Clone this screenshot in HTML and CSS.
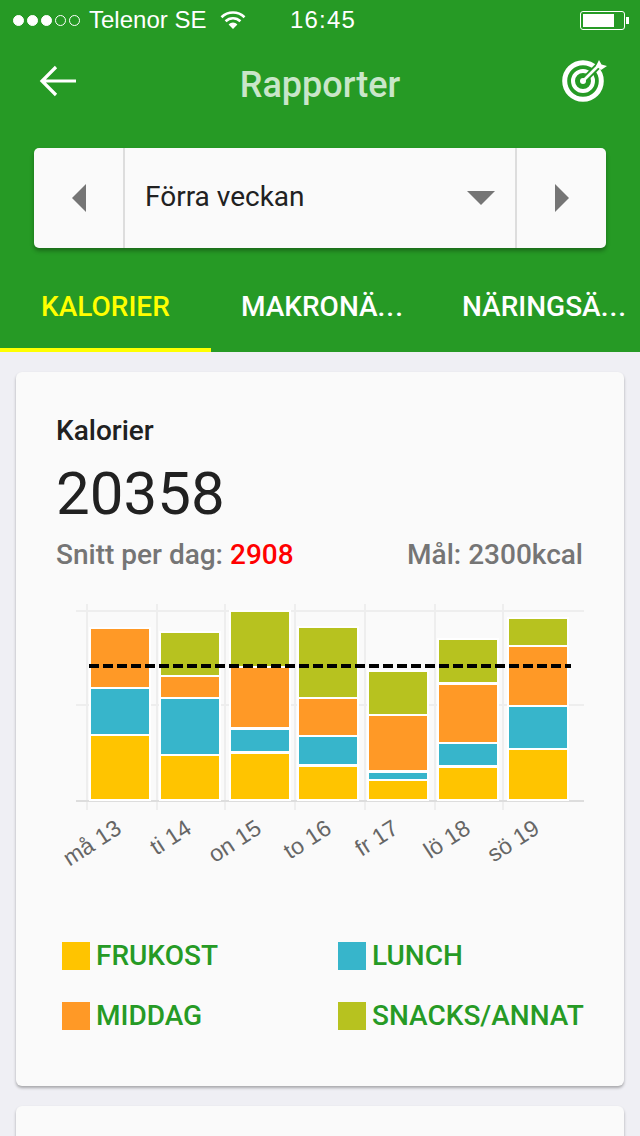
FILE: index.html
```html
<!DOCTYPE html>
<html lang="sv">
<head>
    <meta charset="UTF-8">
    <meta name="viewport" content="width=device-width, initial-scale=1.0">
    <title>Rapporter</title>
    <link rel="stylesheet" href="styles.css">
</head>
<body>
    <header class="top">
        <div class="status-bar">
            <div class="signal">
                <span class="dot"></span><span class="dot"></span><span class="dot"></span><span class="dot off"></span><span class="dot off"></span>
            </div>
            <span class="carrier">Telenor SE</span>
            <svg class="wifi" width="26" height="20" viewBox="0 0 26 20">
                <path d="M1.5 7.2a16.5 16.5 0 0 1 23 0" fill="none" stroke="#fff" stroke-width="2.6"/>
                <path d="M5.6 11.2a10.6 10.6 0 0 1 14.8 0" fill="none" stroke="#fff" stroke-width="2.6"/>
                <path d="M13 19l-4.4-4.6a6.2 6.2 0 0 1 8.8 0z" fill="#fff"/>
            </svg>
            <span class="clock">16:45</span>
            <div class="battery"><div class="battery-fill"></div></div>
            <div class="battery-nub"></div>
        </div>
        <div class="nav">
            <svg class="back" width="38" height="32" viewBox="0 0 38 32">
                <path d="M37 16H3M17 2L3 16l14 14" fill="none" stroke="#fff" stroke-width="3.2"/>
            </svg>
            <h1 class="nav-title">Rapporter</h1>
            <svg class="goal" width="48" height="48" viewBox="0 0 48 48">
                <circle cx="23" cy="23" r="18.3" fill="none" stroke="#fff" stroke-width="5"/>
                <circle cx="23" cy="23" r="10" fill="none" stroke="#fff" stroke-width="4"/>
                <path d="M23 23L41 5" stroke="#269a25" stroke-width="6.5"/>
                <path d="M23 23L40 6" stroke="#fff" stroke-width="2.6"/>
                <circle cx="23" cy="23" r="3" fill="#fff"/>
                <path d="M36 8l3-6 2.5 4.5 5.5 1.5-6 4z" fill="#fff"/>
            </svg>
        </div>
        <div class="range">
            <div class="range-btn">
                <svg width="14" height="28" viewBox="0 0 14 28"><path d="M14 0v28L0 14z" fill="#757575"/></svg>
            </div>
            <div class="range-select">
                <span class="range-label">Förra veckan</span>
                <svg width="28" height="14" viewBox="0 0 28 14"><path d="M0 0h28L14 14z" fill="#757575"/></svg>
            </div>
            <div class="range-btn">
                <svg width="14" height="28" viewBox="0 0 14 28"><path d="M0 0v28l14-14z" fill="#757575"/></svg>
            </div>
        </div>
        <nav class="tabs">
            <div class="tab tab-active">Kalorier</div>
            <div class="tab tab-macro">Makronä<span class="dots">...</span></div>
            <div class="tab tab-nutri">Näringsä<span class="dots">...</span></div>
        </nav>
    </header>

    <main class="content">
        <section class="card">
            <div class="card-title">Kalorier</div>
            <div class="total">20358</div>
            <div class="summary">
                <span>Snitt per dag: <b class="over">2908</b></span>
                <span>Mål: 2300kcal</span>
            </div>
            <svg class="chart" width="608" height="320" viewBox="16 590 608 320">
                <g class="grid">
                    <path d="M76 611H584M76 705H584"/>
                    <path d="M87 604V810M157 604V810M225 604V810M295 604V810M365 604V810M435 604V810M503 604V810"/>
                </g>
                <path class="axis" d="M76 801H584"/>

                <g class="backing">
                    <rect x="89" y="627" width="62" height="174"/>
                    <rect x="159" y="631" width="62" height="170"/>
                    <rect x="229" y="610" width="62" height="191"/>
                    <rect x="297" y="626" width="62" height="175"/>
                    <rect x="367" y="670" width="62" height="131"/>
                    <rect x="437" y="638" width="62" height="163"/>
                    <rect x="507" y="617" width="62" height="184"/>
                </g>

                <rect class="olive" x="161" y="633" width="58" height="42"/>
                <rect class="olive" x="231" y="612" width="58" height="54"/>
                <rect class="olive" x="299" y="628" width="58" height="69"/>
                <rect class="olive" x="369" y="672" width="58" height="42"/>
                <rect class="olive" x="439" y="640" width="58" height="42"/>
                <rect class="olive" x="509" y="619" width="58" height="26"/>

                <rect class="orange" x="91" y="629" width="58" height="58"/>
                <rect class="orange" x="161" y="677" width="58" height="20"/>
                <rect class="orange" x="231" y="668" width="58" height="59"/>
                <rect class="orange" x="299" y="699" width="58" height="36"/>
                <rect class="orange" x="369" y="716" width="58" height="54"/>
                <rect class="orange" x="439" y="685" width="58" height="57"/>
                <rect class="orange" x="509" y="647" width="58" height="58"/>

                <rect class="teal" x="91" y="689" width="58" height="45"/>
                <rect class="teal" x="161" y="699" width="58" height="55"/>
                <rect class="teal" x="231" y="730" width="58" height="21"/>
                <rect class="teal" x="299" y="737" width="58" height="27"/>
                <rect class="teal" x="369" y="773" width="58" height="6"/>
                <rect class="teal" x="439" y="744" width="58" height="21"/>
                <rect class="teal" x="509" y="707" width="58" height="41"/>

                <rect class="yellow" x="91" y="736" width="58" height="63"/>
                <rect class="yellow" x="161" y="756" width="58" height="43"/>
                <rect class="yellow" x="231" y="754" width="58" height="45"/>
                <rect class="yellow" x="299" y="767" width="58" height="32"/>
                <rect class="yellow" x="369" y="781" width="58" height="18"/>
                <rect class="yellow" x="439" y="768" width="58" height="31"/>
                <rect class="yellow" x="509" y="750" width="58" height="49"/>

                <path class="goal-line" d="M89 666H571"/>

                <g class="labels">
                    <text transform="translate(123 832) rotate(-33)">må 13</text>
                    <text transform="translate(193 832) rotate(-33)">ti 14</text>
                    <text transform="translate(263 832) rotate(-33)">on 15</text>
                    <text transform="translate(333 832) rotate(-33)">to 16</text>
                    <text transform="translate(400 832) rotate(-33)">fr 17</text>
                    <text transform="translate(472 832) rotate(-33)">lö 18</text>
                    <text transform="translate(541 832) rotate(-33)">sö 19</text>
                </g>
            </svg>
            <div class="legend">
                <div class="legend-item"><span class="swatch swatch-yellow"></span>Frukost</div>
                <div class="legend-item"><span class="swatch swatch-teal"></span>Lunch</div>
                <div class="legend-item"><span class="swatch swatch-orange"></span>Middag</div>
                <div class="legend-item"><span class="swatch swatch-olive"></span>Snacks/annat</div>
            </div>
        </section>
        <section class="card card-next"></section>
    </main>
</body>
</html>
```

FILE: styles.css
```css
html, body {
    margin: 0;
    height: 1136px;
    overflow: hidden;
}
body {
    background-color: #efeff4;
    font-family: Roboto, "Liberation Sans", sans-serif;
    color: #212121;
}

/* green top area */
.top {
    background-color: #269a25;
    height: 352px;
    color: #fff;
}
.status-bar {
    height: 40px;
    display: flex;
    align-items: center;
    padding-left: 13px;
    font-family: "Liberation Sans", Arial, sans-serif;
    font-size: 24px;
}
.signal {
    display: flex;
    gap: 3px;
    width: 76px;
}
.dot {
    width: 11px;
    height: 11px;
    border: 1px solid #fff;
    border-radius: 50%;
    background-color: #fff;
    box-sizing: border-box;
}
.dot.off {
    background-color: transparent;
}
.carrier {
    width: 131px;
}
.wifi {
    width: 26px;
}
.clock {
    margin-left: 44px;
    width: 290px;
    letter-spacing: 1.2px;
}
.battery {
    width: 45px;
    height: 19px;
    border: 1px solid #fff;
    border-radius: 3px;
    box-sizing: border-box;
    padding: 2px;
}
.battery-fill {
    width: 31px;
    height: 13px;
    background-color: #fff;
}
.battery-nub {
    width: 3px;
    height: 7px;
    margin-left: 1px;
    background-color: #fff;
}

.nav {
    height: 88px;
    display: grid;
    grid-template-columns: 1fr auto 1fr;
    align-items: center;
    padding: 0 33px 0 39px;
}
.nav-title {
    margin: 0 0 -1px -6px;
    font-size: 36px;
    font-weight: 500;
    color: #c9e6c9;
}
.goal {
    justify-self: end;
    margin-right: -1px;
    margin-top: -4px;
}
.back {
    margin-top: -6px;
}

.range {
    margin: 20px 34px 0;
    height: 100px;
    display: grid;
    grid-template-columns: 89px 1fr 89px;
    background-color: #fafafa;
    border-radius: 5px;
    box-shadow: 0 3px 4px rgba(0, 0, 0, 0.3);
    color: #212121;
}
.range-btn {
    display: flex;
    align-items: center;
    justify-content: center;
}
.range-select {
    display: flex;
    align-items: center;
    justify-content: space-between;
    padding: 0 20px 0 20px;
    border-left: 2px solid #ddd;
    border-right: 2px solid #ddd;
    font-size: 28px;
}
.range-label {
    margin-top: -3px;
}

.tabs {
    display: flex;
    margin-top: 26px;
    height: 78px;
    overflow: hidden;
}
.tab {
    flex: none;
    box-sizing: border-box;
    padding-top: 16px;
    font-size: 28px;
    font-weight: 500;
    text-transform: uppercase;
    white-space: nowrap;
}
.dots {
    letter-spacing: 1px;
}
.tab-active {
    width: 211px;
    padding-left: 41px;
    color: #ffff00;
    border-bottom: 4px solid #ffff00;
}
.tab-macro {
    width: 251px;
    padding-left: 30px;
}
.tab-nutri {
    width: 178px;
}

/* cards */
.content {
    padding: 20px 16px 0;
}
.card {
    background-color: #fafafa;
    border-radius: 6px;
    box-shadow: 0 2px 3px rgba(0, 0, 0, 0.3);
    height: 714px;
    box-sizing: border-box;
    padding-top: 44px;
}
.card-next {
    margin-top: 20px;
    height: 60px;
}
.card-title {
    margin-left: 40px;
    font-size: 28px;
    font-weight: 500;
    line-height: 30px;
}
.total {
    margin: 13px 0 0 40px;
    font-size: 60px;
    line-height: 70px;
}
.summary {
    display: flex;
    justify-content: space-between;
    margin: 11px 41px 0 40px;
    font-size: 28px;
    font-weight: 500;
    line-height: 30px;
    color: #757575;
}
.over {
    font-weight: 500;
    color: #ff0000;
}

/* chart */
.chart {
    display: block;
    margin-top: 20px;
}
.grid path {
    fill: none;
    stroke: #eeeeee;
    stroke-width: 2;
}
.axis {
    fill: none;
    stroke: #dddddd;
    stroke-width: 2;
}
.backing rect {
    fill: #fff;
}
.olive {
    fill: #b7c21f;
}
.orange {
    fill: #ff9926;
}
.teal {
    fill: #37b5cb;
}
.yellow {
    fill: #ffc400;
}
.goal-line {
    fill: none;
    stroke: #000;
    stroke-width: 4;
    stroke-dasharray: 10 4;
}
.labels text {
    font-family: "Liberation Sans", Arial, sans-serif;
    font-size: 23px;
    fill: #666;
    text-anchor: end;
}

/* legend */
.legend {
    display: grid;
    grid-template-columns: 276px 1fr;
    row-gap: 32px;
    margin: 31px 0 0 46px;
}
.legend-item {
    display: flex;
    align-items: center;
    gap: 6px;
    height: 28px;
    font-size: 28px;
    font-weight: 500;
    text-transform: uppercase;
    color: #269a25;
}
.swatch {
    width: 28px;
    height: 28px;
    margin-top: 2px;
}
.swatch-yellow {
    background-color: #ffc400;
}
.swatch-teal {
    background-color: #37b5cb;
}
.swatch-orange {
    background-color: #ff9926;
}
.swatch-olive {
    background-color: #b7c21f;
}
```
